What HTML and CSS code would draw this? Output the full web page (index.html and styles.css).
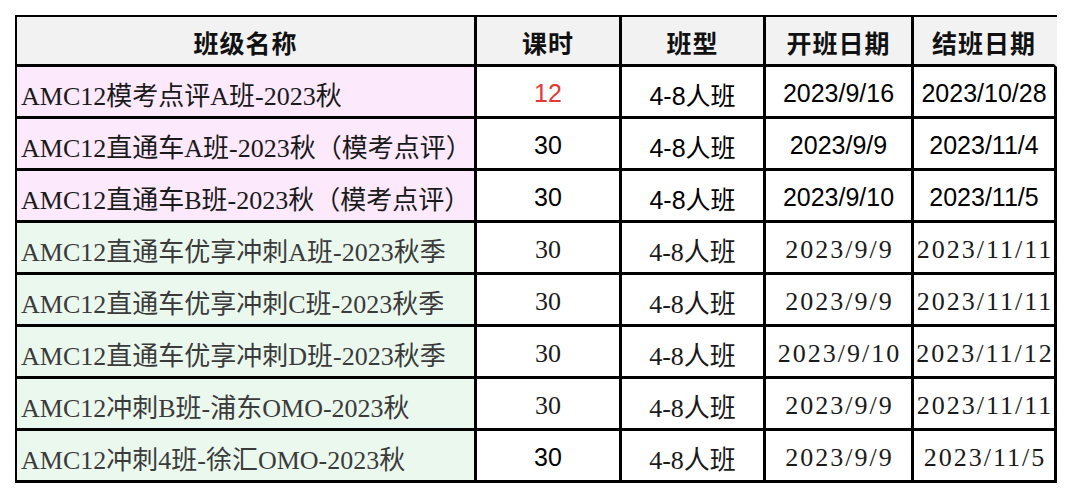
FILE: index.html
```html
<!DOCTYPE html>
<html lang="zh-CN">
<head>
<meta charset="utf-8">
<title>AMC12 班级</title>
<link rel="stylesheet" href="styles.css">
</head>
<body>
<table class="sheet">
  <colgroup>
    <col class="c-name"><col class="c-hours"><col class="c-type"><col class="c-start"><col class="c-end">
  </colgroup>
  <thead>
    <tr>
      <th>班级名称</th><th class="hours">课时</th><th>班型</th><th>开班日期</th><th class="last">结班日期</th>
    </tr>
  </thead>
  <tbody>
    <tr class="pink">
      <td class="name">AMC12模考点评A班-2023秋</td><td class="hours red">12</td><td>4-8人班</td><td>2023/9/16</td><td>2023/10/28</td>
    </tr>
    <tr class="pink">
      <td class="name">AMC12直通车A班-2023秋（模考点评）</td><td class="hours">30</td><td>4-8人班</td><td>2023/9/9</td><td>2023/11/4</td>
    </tr>
    <tr class="pink">
      <td class="name">AMC12直通车B班-2023秋（模考点评）</td><td class="hours">30</td><td>4-8人班</td><td>2023/9/10</td><td>2023/11/5</td>
    </tr>
    <tr class="mint">
      <td class="name">AMC12直通车优享冲刺A班-2023秋季</td><td class="hours">30</td><td>4-8人班</td><td class="date">2023/9/9</td><td class="date">2023/11/11</td>
    </tr>
    <tr class="mint">
      <td class="name">AMC12直通车优享冲刺C班-2023秋季</td><td class="hours">30</td><td>4-8人班</td><td class="date">2023/9/9</td><td class="date">2023/11/11</td>
    </tr>
    <tr class="mint">
      <td class="name">AMC12直通车优享冲刺D班-2023秋季</td><td class="hours">30</td><td>4-8人班</td><td class="date">2023/9/10</td><td class="date">2023/11/12</td>
    </tr>
    <tr class="mint">
      <td class="name">AMC12冲刺B班-浦东OMO-2023秋</td><td class="hours">30</td><td>4-8人班</td><td class="date">2023/9/9</td><td class="date">2023/11/11</td>
    </tr>
    <tr class="mint">
      <td class="name">AMC12冲刺4班-徐汇OMO-2023秋</td><td class="hours sans">30</td><td>4-8人班</td><td class="date">2023/9/9</td><td class="date">2023/11/5</td>
    </tr>
  </tbody>
</table>
</body>
</html>
```

FILE: styles.css
```css
html, body {
  margin: 0;
  padding: 0;
  background: #ffffff;
}

.sheet {
  margin: 15px 0 0 15px;
  border-collapse: separate;
  border-spacing: 0;
  table-layout: fixed;
  width: 1042px;
  border-left: 2px solid #000;
  border-top: 2px solid #000;
  color: #111;
}

.c-name { width: 460px; }
.c-hours { width: 145px; }
.c-type { width: 144px; }
.c-start { width: 148px; }
.c-end { width: 143px; }

.sheet th,
.sheet td {
  border-right: 3px solid #000;
  border-bottom: 3px solid #000;
  padding: 0;
  text-align: center;
  vertical-align: middle;
  white-space: nowrap;
  overflow: hidden;
  box-sizing: border-box;
}

.sheet th {
  height: 50px;
  background: #f2f2f2;
  font-family: "Noto Sans CJK SC", sans-serif;
  font-weight: 700;
  font-size: 25px;
  letter-spacing: 1px;
  color: #111;
  padding-top: 2px;
}

.sheet th.last {
  border-right-color: #f2f2f2;
}

.sheet td {
  height: 52px;
  padding-top: 4px;
}

.sheet td.name {
  text-align: left;
  padding-left: 4px;
  font-family: "Liberation Serif", "Noto Sans CJK SC", serif;
  font-size: 26px;
}

.pink td {
  font-family: "Liberation Sans", "Noto Sans CJK SC", sans-serif;
  font-size: 25px;
  color: #000;
}

.pink td.name {
  background: #fce9fc;
  color: #1a1a1a;
}

.mint td {
  font-family: "Liberation Serif", "Noto Sans CJK SC", serif;
  font-size: 26px;
  color: #1a1a1a;
}

.mint td.date {
  letter-spacing: 2px;
  padding-left: 2px;
}

.mint td.name {
  background: #ebf8ee;
  color: #3b3b3b;
}

.mint td.sans {
  font-family: "Liberation Sans", sans-serif;
  font-size: 25px;
  color: #000;
}

.red {
  color: #e53935 !important;
}
```
